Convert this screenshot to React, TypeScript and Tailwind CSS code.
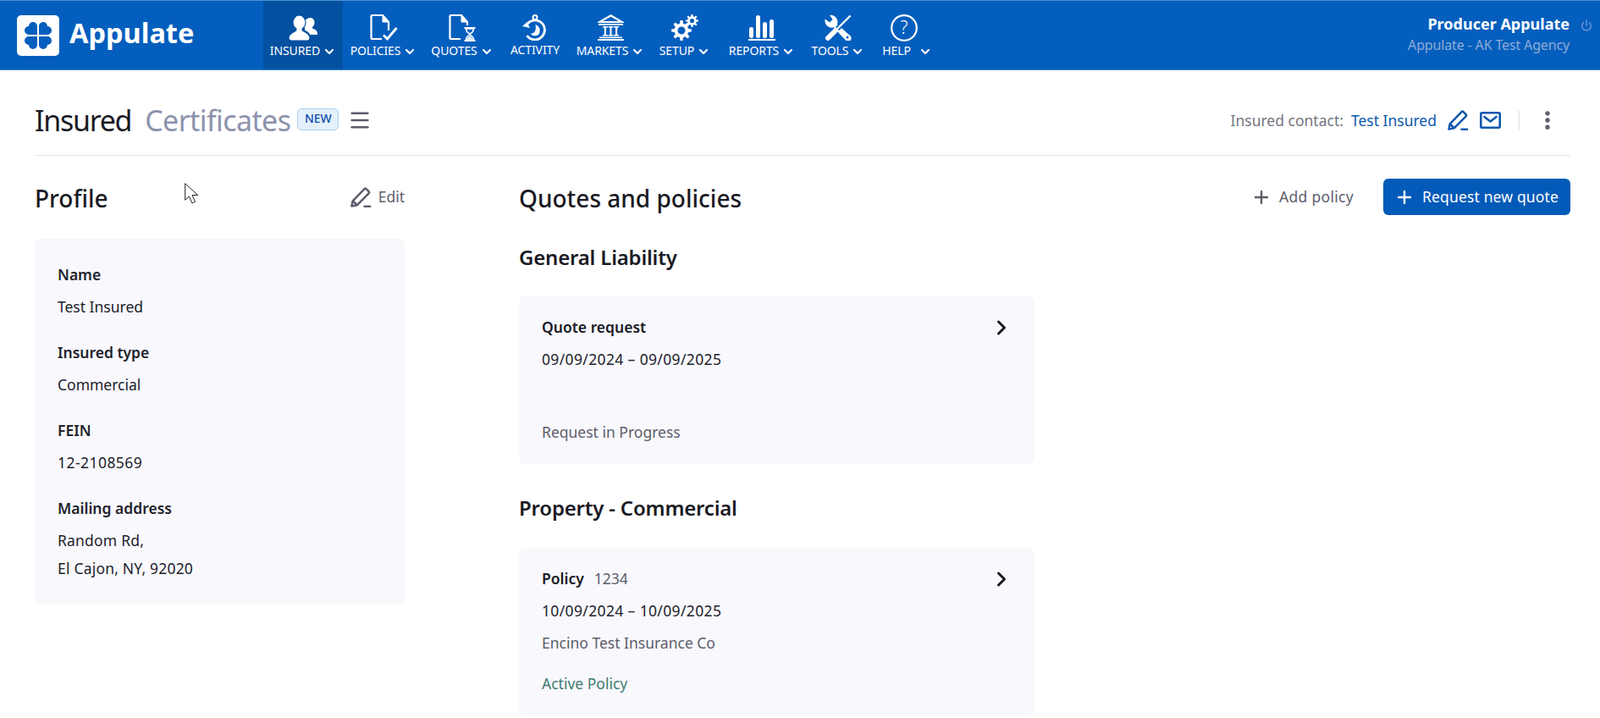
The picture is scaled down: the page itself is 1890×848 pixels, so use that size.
import { ReactNode } from "react";
import { ChevronDown, ChevronRight, Menu, MoreVertical, Plus, Power } from "lucide-react";

function gear(cx: number, cy: number, outer: number, inner: number, hole: number, teeth: number) {
  const pts: string[] = [];
  const step = (Math.PI * 2) / teeth;
  for (let i = 0; i < teeth; i++) {
    const a = i * step;
    const corners: [number, number][] = [
      [a - step * 0.3, inner],
      [a - step * 0.17, outer],
      [a + step * 0.17, outer],
      [a + step * 0.3, inner],
    ];
    corners.forEach(([t, r]) => pts.push(`${(cx + r * Math.cos(t)).toFixed(2)} ${(cy + r * Math.sin(t)).toFixed(2)}`));
  }
  return `M${pts.join("L")}Z M${cx + hole} ${cy}A${hole} ${hole} 0 1 0 ${cx - hole} ${cy}A${hole} ${hole} 0 1 0 ${cx + hole} ${cy}Z`;
}

function CloverLogo() {
  const petal = "M-1 -1V-11A5 5 0 0 0 -11 -11A5 5 0 0 0 -11 -1Z";
  return (
    <svg width="50" height="48" viewBox="0 0 50 48">
      <rect width="50" height="48" rx="5" fill="#fff" />
      <g transform="translate(25 24)" fill="#045ebd">
        <path d={petal} />
        <path d={petal} transform="scale(-1 1)" />
        <path d={petal} transform="scale(1 -1)" />
        <path d={petal} transform="scale(-1 -1)" />
      </g>
    </svg>
  );
}

function InsuredIcon() {
  return (
    <svg width="34" height="30" viewBox="0 0 34 30" fill="#fff">
      <path d="M25.500 3c3 0 5 2.400 5 5.500 0 2.500-1 4.500-2.500 5.500v1.500c2.500 1 6 2 6 6.500v1h-9c-.5-2.500-3-4-6-5.500v-2.500c-1-1.500-1.500-3-1.500-5 0-3.500 4-6.500 8-7z" />
      <g stroke="#0451a1" strokeWidth="1.200">
        <path d="M9 15h7v3c4 2 9 3.500 9 8.500 0 2-1 3.500-3 3.500H3c-2 0-3-1.500-3-3.500C0 21.500 5 20 9 18z" />
        <ellipse cx="12.500" cy="8.500" rx="7.500" ry="8.500" />
      </g>
      <path d="M9.500 14h6v5h-6z" />
    </svg>
  );
}

function DocIcon({ edge, children }: { edge: number; children: ReactNode }) {
  return (
    <svg width="33" height="32" viewBox="0 0 33 32" fill="none" stroke="#fff">
      <path d={`M14 29H3a1.500 1.500 0 0 1-1.500-1.500v-25A1.500 1.500 0 0 1 3 1h12l7 8v${edge}`} strokeWidth="2.200" />
      <path d="M15 1l7 8h-7z" fill="#fff" strokeWidth="1" />
      {children}
    </svg>
  );
}

function ActivityIcon() {
  return (
    <svg width="30" height="31" viewBox="0 0 30 31" fill="none" stroke="#fff" strokeWidth="2.800">
      <circle cx="15" cy="3.500" r="2.500" strokeWidth="2" />
      <path d="M15 6v2" strokeWidth="2" />
      <path d="M4.500 13.500A11.500 11.500 0 1 1 5.500 25" />
      <path d="M0 14l5.500-5 3.500 7z" fill="#fff" strokeWidth="0" />
      <path d="M15.500 12a7.500 7.500 0 0 1 3 12.500c-4 1.800-7.500.3-8.700-1.800 4 .3 7.200-3 5.700-10.700z" fill="#fff" strokeWidth="0" />
    </svg>
  );
}

function MarketsIcon() {
  return (
    <svg width="31" height="31" viewBox="0 0 31 31" fill="#fff">
      <path d="M15.500 0L31 9v1H0V9zM15.500 2.800L6 8h19z" fillRule="evenodd" />
      <rect x="1" y="11" width="29" height="1.800" />
      <path d="M6 14h6v1.500h-2V24h2v1.500H6V24h1.800v-8.500H6zM12.700 14h5.600v1.500h-1.800V24h1.800v1.500h-5.600V24h1.800v-8.500h-1.800zM19 14h6v1.500h-1.800V24H25v1.500h-6V24h2v-8.500h-2z" />
      <rect x="2" y="26.500" width="27" height="1.600" />
      <rect x="0" y="29" width="31" height="2" />
    </svg>
  );
}

function SetupIcon() {
  return (
    <svg width="32" height="31" viewBox="0 0 32 31" fill="#fff" fillRule="evenodd">
      <path d={gear(12, 19, 12, 8.500, 4.500, 8)} />
      <path d={gear(24.500, 7.500, 7.500, 5.300, 2.600, 8)} />
    </svg>
  );
}

function ReportsIcon() {
  return (
    <svg width="32" height="30" viewBox="0 0 32 30" fill="#fff">
      <rect x="1" y="14" width="5" height="13" rx="2.500" />
      <rect x="9" y="0" width="5" height="27" rx="2.500" />
      <rect x="17" y="8" width="5" height="19" rx="2.500" />
      <rect x="25" y="5" width="5" height="22" rx="2.500" />
      <rect x="0" y="28" width="32" height="2" />
    </svg>
  );
}

function ToolsIcon() {
  return (
    <svg width="32" height="31" viewBox="0 0 32 31" fill="none">
      <path d="M6 1a8 8 0 0 1 9 10.500L30 25a3.800 3.800 0 1 1-5.500 5L10.500 15.500A8 8 0 0 1 .8 5.500L6 9.500l3.500-3.500z" fill="#fff" />
      <circle cx="27" cy="27" r="1.500" fill="#045ebd" />
      <path d="M30 2L15 17" stroke="#045ebd" strokeWidth="6" />
      <path d="M30.500 1.500L15 17" stroke="#fff" strokeWidth="2.400" />
      <path d="M13.500 18.500L4.500 27.500" stroke="#045ebd" strokeWidth="9" />
      <path d="M13 19L4 28" stroke="#fff" strokeWidth="6" strokeLinecap="round" />
    </svg>
  );
}

function HelpIcon() {
  return (
    <svg width="32" height="32" viewBox="0 0 32 32" fill="none">
      <circle cx="16" cy="16" r="14.800" stroke="#fff" strokeWidth="2.200" />
      <text x="16" y="23" textAnchor="middle" fontSize="21" fill="#fff" className="font-['Roboto',sans-serif] font-light">?</text>
    </svg>
  );
}

function PencilIcon({ color }: { color: string }) {
  return (
    <svg width="25" height="24" viewBox="0 0 25 24" fill="none" stroke={color} strokeWidth="2.500" strokeLinejoin="round">
      <path d="M1.400 22.600l1.300-6.300L16.500 2.200a1.500 1.500 0 0 1 2.100 0l3 3a1.500 1.500 0 0 1 0 2.100L7.700 21.300z" />
      <path d="M3 16.500l4.500 4.500" />
      <path d="M15.500 22.800h8.500" />
    </svg>
  );
}

function MailIcon() {
  return (
    <svg width="25" height="20" viewBox="0 0 25 20" fill="none" stroke="#0d58ad" strokeWidth="2.600" strokeLinejoin="round">
      <rect x="1.300" y="1.300" width="22.400" height="17.400" rx="1.500" />
      <path d="M5.500 6l7 5.500 7-5.500" strokeLinecap="round" />
    </svg>
  );
}

const NAV = [
  { label: "INSURED", width: "w-[94px]", active: true, chevron: true, icon: <InsuredIcon /> },
  {
    label: "POLICIES",
    width: "w-[96px]",
    chevron: true,
    icon: (
      <DocIcon edge={10}>
        <path d="M16 24.500l4.500 4.500L31.500 16" strokeWidth="2.800" />
      </DocIcon>
    ),
  },
  {
    label: "QUOTES",
    width: "w-[90px]",
    chevron: true,
    icon: (
      <DocIcon edge={4}>
        <path d="M18.500 16h13M18.500 31h13" strokeWidth="2" />
        <path d="M20.500 17c0 5 4.500 5 4.500 6.500s-4.500 1.500-4.500 6.500h9c0-5-4.500-5-4.500-6.500s4.500-1.500 4.500-6.500z" strokeWidth="1.600" />
        <path d="M22 29.500c0-2.500 3-3.500 3-4.500 0 1 3 2 3 4.500z" fill="#fff" strokeWidth="0" />
      </DocIcon>
    ),
  },
  { label: "ACTIVITY", width: "w-[82px]", icon: <ActivityIcon /> },
  { label: "MARKETS", width: "w-[96px]", chevron: true, icon: <MarketsIcon /> },
  { label: "SETUP", width: "w-[80px]", chevron: true, icon: <SetupIcon /> },
  { label: "REPORTS", width: "w-[102px]", chevron: true, icon: <ReportsIcon /> },
  { label: "TOOLS", width: "w-[78px]", chevron: true, icon: <ToolsIcon /> },
  { label: "HELP", width: "w-[85px]", chevron: true, wide: true, icon: <HelpIcon /> },
];

const PROFILE = [
  { label: "Name", lines: ["Test Insured"], valueClass: "" },
  { label: "Insured type", lines: ["Commercial"], valueClass: "" },
  { label: "FEIN", lines: ["12-2108569"], valueClass: "tracking-[0.45px]" },
  { label: "Mailing address", lines: ["Random Rd,", "El Cajon, NY, 92020"], valueClass: "tracking-[0.2px]" },
];

function Header() {
  return (
    <header className="flex h-[83px] items-stretch border-y border-t-[#4d8fd0] border-b-[#3d86cf] bg-[#045ebd]">
      <div className="flex w-[311px] shrink-0 items-center pl-5 pt-[1px]">
        <CloverLogo />
        <span className="mb-[5px] ml-[12px] font-['Lato',sans-serif] text-[32.5px] leading-none font-bold text-white">
          Appulate
        </span>
      </div>
      <nav className="flex">
        {NAV.map((item) => (
          <div
            key={item.label}
            className={`flex ${item.width} flex-col items-center pt-[15px] ${item.active ? "bg-[#0451a1]" : ""}`}
          >
            <div className={`flex h-[33px] items-center ${item.wide ? "mr-[7px]" : ""}`}>{item.icon}</div>
            <div className="mt-[2px] flex items-center font-['Liberation_Sans',sans-serif] text-[14px] leading-[16px] tracking-[-0.1px] text-white">
              {item.label}
              {item.chevron && (
                <ChevronDown
                  size={16}
                  strokeWidth={3.200}
                  className={item.wide ? "mt-[2px] ml-[9px]" : "mt-[2px] ml-[3px]"}
                />
              )}
            </div>
          </div>
        ))}
      </nav>
      <div className="ml-auto flex font-['Liberation_Sans',sans-serif]">
        <div className="flex flex-col items-end pt-[16px]">
          <span className="text-[18px] leading-[22px] font-bold text-white">Producer Appulate</span>
          <span className="mt-[4px] text-[16px] leading-[20px] tracking-[-0.15px] text-[#8fabd6]">Appulate - AK Test Agency</span>
        </div>
        <Power size={14} strokeWidth={3} className="mt-[22px] mr-[9px] ml-[13px] text-[#5c8fd2]" />
      </div>
    </header>
  );
}

function TitleBar() {
  return (
    <div className="flex h-[101px] items-center border-b border-[#e2e2e6] pt-[18px]">
      <h1 className="text-[34px] leading-[44px] tracking-[-1.3px] text-[#1a1a24]">Insured</h1>
      <span className="ml-[16px] text-[34px] leading-[44px] tracking-[-0.6px] text-[#8c92ad]">Certificates</span>
      <span className="mb-[3px] ml-[8px] flex h-[26px] w-[49px] items-center justify-center rounded-[5px] border border-[#a9d0f0] bg-[#e3f0fb] pb-[3px] text-[14px] font-medium text-[#0d4fa8]">
        NEW
      </span>
      <Menu size={28} strokeWidth={2.200} className="ml-[11px] text-[#5a5a68]" />
      <div className="ml-auto flex items-center text-[17.5px]">
        <span className="text-[#74747f]">Insured contact:</span>
        <span className="ml-[9px] text-[#0d58ad]">Test Insured</span>
        <span className="ml-[13px]"><PencilIcon color="#0d58ad" /></span>
        <span className="ml-[13px]"><MailIcon /></span>
        <span className="ml-[21px] h-[22px] w-px bg-[#dadde6]" />
        <MoreVertical size={28} strokeWidth={2.600} className="mr-[13px] ml-[19px] text-[#5a5a68]" />
      </div>
    </div>
  );
}

function ProfileColumn() {
  return (
    <section className="w-[437px] shrink-0">
      <div className="flex h-[43px] items-center justify-between">
        <h2 className="pt-[2px] text-[28px] font-medium text-[#1a1a24]">Profile</h2>
        <div className="flex items-center text-[17.5px] text-[#5d5d6b]">
          <PencilIcon color="#5d5d6b" />
          <span className="ml-[8px]">Edit</span>
        </div>
      </div>
      <div className="mt-[28px] h-[431px] rounded-[8px] bg-[#f8f8fd] px-[27px] pt-[29px] text-[17.5px] leading-[26px] text-[#22222c]">
        <dl className="flex flex-col gap-[28px]">
          {PROFILE.map((row) => (
            <div key={row.label}>
              <dt className="font-semibold">{row.label}</dt>
              <dd className={`mt-[12px] flex flex-col gap-[7px] ${row.valueClass}`}>
                {row.lines.map((line) => (
                  <span key={line}>{line}</span>
                ))}
              </dd>
            </div>
          ))}
        </dl>
      </div>
    </section>
  );
}

function QuoteCard({ title, number, dates, carrier, status, statusClass }: {
  title: string;
  number?: string;
  dates: string;
  carrier?: string;
  status: string;
  statusClass: string;
}) {
  return (
    <div className="flex h-[198px] w-[609px] flex-col rounded-[8px] bg-[#f8f8fd] px-[27px] pt-[23px] pb-[25px] text-[17.5px] leading-[26px]">
      <div className="flex h-[26px] items-center justify-between">
        <div>
          <span className="font-semibold text-[#1a1a24]">{title}</span>
          {number && <span className="ml-[12px] text-[#5d5d6b]">{number}</span>}
        </div>
        <ChevronRight size={28} strokeWidth={2.600} className="mt-[2px] mr-[-2px] text-[#1a1a24]" />
      </div>
      <div className="mt-[12px] tracking-[0.36px] text-[#22222c]">{dates}</div>
      {carrier && <div className="mt-[12px] text-[#5d5d6b]">{carrier}</div>}
      <div className={`mt-auto ${statusClass}`}>{status}</div>
    </div>
  );
}

function QuotesColumn() {
  return (
    <section className="flex-1">
      <div className="flex h-[43px] items-center">
        <h2 className="pt-[2px] text-[28px] font-medium text-[#1a1a24]">Quotes and policies</h2>
        <div className="ml-auto flex items-center text-[17.5px] text-[#5d5d6b]">
          <Plus size={24} strokeWidth={2.400} />
          <span className="ml-[9px] tracking-[0.3px]">Add policy</span>
        </div>
        <button className="ml-[35px] flex h-[43px] w-[221px] items-center rounded-[6px] bg-[#035ab8] pl-[13px] text-[17.5px] text-white">
          <Plus size={24} strokeWidth={2.400} />
          <span className="ml-[9px] tracking-[0.15px]">Request new quote</span>
        </button>
      </div>
      <h3 className="mt-[35px] text-[24px] leading-[30px] font-semibold tracking-[-0.2px] text-[#1a1a24]">General Liability</h3>
      <div className="mt-[31px]">
        <QuoteCard
          title="Quote request"
          dates="09/09/2024 – 09/09/2025"
          status="Request in Progress"
          statusClass="text-[#5d5d6b]"
        />
      </div>
      <h3 className="mt-[37px] text-[24px] leading-[30px] font-semibold tracking-[-0.2px] text-[#1a1a24]">Property - Commercial</h3>
      <div className="mt-[32px]">
        <QuoteCard
          title="Policy"
          number="1234"
          dates="10/09/2024 – 10/09/2025"
          carrier="Encino Test Insurance Co"
          status="Active Policy"
          statusClass="text-[#3f7a6e]"
        />
      </div>
    </section>
  );
}

export default function App() {
  return (
    <div className="relative h-[848px] w-[1890px] overflow-hidden bg-white font-['Open_Sans',sans-serif]">
      <Header />
      <main className="pr-[35px] pl-[41px]">
        <TitleBar />
        <div className="flex gap-[135px] pt-[27px]">
          <ProfileColumn />
          <QuotesColumn />
        </div>
      </main>
      {/* mouse pointer caught in the capture */}
      <svg className="absolute top-[216px] left-[218px]" width="18" height="28" viewBox="0 0 18 28">
        <path d="M.7.7v19.600l4.700-4.400 3.500 8 3.600-1.600-3.500-7.800h6.700z" fill="#fff" stroke="#222" strokeWidth="1" />
      </svg>
    </div>
  );
}
